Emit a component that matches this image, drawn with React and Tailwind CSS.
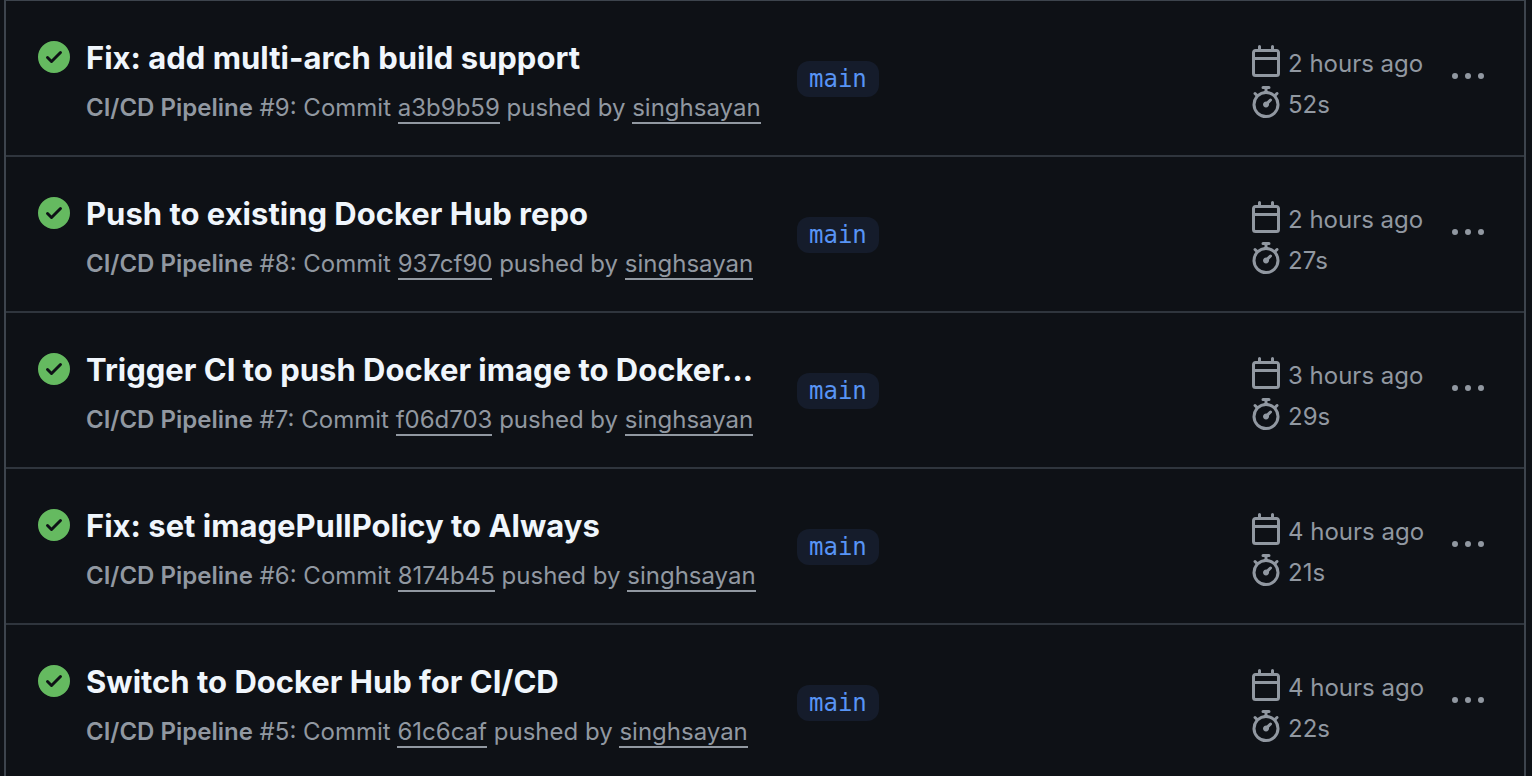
const runs = [
  { id: 9, title: "Fix: add multi-arch build support", commit: "a3b9b59", ago: "2 hours ago", duration: "52s" },
  { id: 8, title: "Push to existing Docker Hub repo", commit: "937cf90", ago: "2 hours ago", duration: "27s" },
  { id: 7, title: "Trigger CI to push Docker image to Docker…", commit: "f06d703", ago: "3 hours ago", duration: "29s" },
  { id: 6, title: "Fix: set imagePullPolicy to Always", commit: "8174b45", ago: "4 hours ago", duration: "21s" },
  { id: 5, title: "Switch to Docker Hub for CI/CD", commit: "61c6caf", ago: "4 hours ago", duration: "22s" },
];

function Icon({ path, className = "" }) {
  return (
    <svg viewBox="0 0 16 16" aria-hidden="true" fill="currentColor" className={`size-8 shrink-0 ${className}`}>
      <path d={path} />
    </svg>
  );
}

const CHECK =
  "M8 16A8 8 0 1 1 8 0a8 8 0 0 1 0 16Zm3.78-9.72a.751.751 0 0 0-.018-1.042.751.751 0 0 0-1.042-.018L6.75 9.19 5.28 7.72a.751.751 0 0 0-1.042.018.751.751 0 0 0-.018 1.042l2 2a.75.75 0 0 0 1.06 0Z";
const CALENDAR =
  "M4.75 0a.75.75 0 0 1 .75.75V2h5V.75a.75.75 0 0 1 1.5 0V2h1.25c.966 0 1.75.784 1.75 1.75v10.5A1.75 1.75 0 0 1 13.25 16H2.75A1.75 1.75 0 0 1 1 14.25V3.75C1 2.784 1.784 2 2.75 2H4V.75A.75.75 0 0 1 4.75 0ZM2.5 7.5v6.75c0 .138.112.25.25.25h10.5a.25.25 0 0 0 .25-.25V7.5Zm10.75-4H2.75a.25.25 0 0 0-.25.25V6h11V3.75a.25.25 0 0 0-.25-.25Z";
const STOPWATCH =
  "M5.75.75A.75.75 0 0 1 6.5 0h3a.75.75 0 0 1 0 1.5h-.75v1l-.001.041a6.724 6.724 0 0 1 3.464 1.435l.007-.006.75-.75a.749.749 0 0 1 1.275.326.749.749 0 0 1-.215.734l-.75.75-.006.007a6.75 6.75 0 1 1-10.548 0L2.72 5.03l-.75-.75a.751.751 0 0 1 .018-1.042.751.751 0 0 1 1.042-.018l.75.75.007.006A6.72 6.72 0 0 1 7.25 2.541V1.5H6.5a.75.75 0 0 1-.75-.75ZM8 14.5a5.25 5.25 0 1 0-.001-10.501A5.25 5.25 0 0 0 8 14.5Zm.389-6.7 1.33-1.33a.75.75 0 1 1 1.061 1.06L9.45 8.861A1.503 1.503 0 0 1 8 10.75a1.499 1.499 0 1 1 .389-2.95Z";
const KEBAB =
  "M0 8a1.5 1.5 0 1 0 3 0 1.5 1.5 0 1 0-3 0M6.5 8a1.5 1.5 0 1 0 3 0 1.5 1.5 0 1 0-3 0M13 8a1.5 1.5 0 1 0 3 0 1.5 1.5 0 1 0-3 0";

function TextLink({ children }) {
  return (
    <a href="#" className="border-b-2 border-[#9198a1]">
      {children}
    </a>
  );
}

function RunRow({ run }) {
  return (
    <li className="flex items-start border-b-2 border-[#2f353d] pt-8 pr-10 pb-7 pl-8">
      <Icon path={CHECK} className="mt-2 text-[#65ba60]" />
      <div className="ml-4 w-[675px] shrink-0">
        <h2 className="text-[31px]/[50px] font-bold whitespace-nowrap text-[#f0f6fc]">
          <a href="#">{run.title}</a>
        </h2>
        <p className="mt-[6px] text-2xl/[38px] whitespace-nowrap">
          <span className="font-semibold">CI/CD Pipeline</span> #{run.id}: Commit <TextLink>{run.commit}</TextLink> pushed by{" "}
          <TextLink>singhsayan</TextLink>
        </p>
      </div>
      <a
        href="#"
        className="mt-7 ml-9 rounded-xl bg-[#151c2b] px-3 font-['DejaVu_Sans_Mono',monospace] text-2xl/[36px] text-[#5894f5]"
      >
        main
      </a>
      <div className="mt-3 ml-auto flex w-[202px] flex-col gap-[9px]">
        <div className="flex h-8 items-center gap-[6px] whitespace-nowrap">
          <Icon path={CALENDAR} />
          <span className="pt-[6px] text-2xl/8">{run.ago}</span>
        </div>
        <div className="flex h-8 items-center gap-[6px] whitespace-nowrap">
          <Icon path={STOPWATCH} />
          <span className="pt-[6px] text-2xl/8">{run.duration}</span>
        </div>
      </div>
      <button type="button" aria-label={`Options for run ${run.id}`} className="mt-[27px]">
        <Icon path={KEBAB} />
      </button>
    </li>
  );
}

export default function App() {
  return (
    <main className="min-h-screen overflow-hidden bg-[#0e1116] pr-[6px] pl-1 font-[Inter,sans-serif] text-[#9198a1]">
      <ul className="h-screen overflow-hidden border-x-2 border-t border-[#3d444d]">
        {runs.map((run) => (
          <RunRow key={run.id} run={run} />
        ))}
      </ul>
    </main>
  );
}
